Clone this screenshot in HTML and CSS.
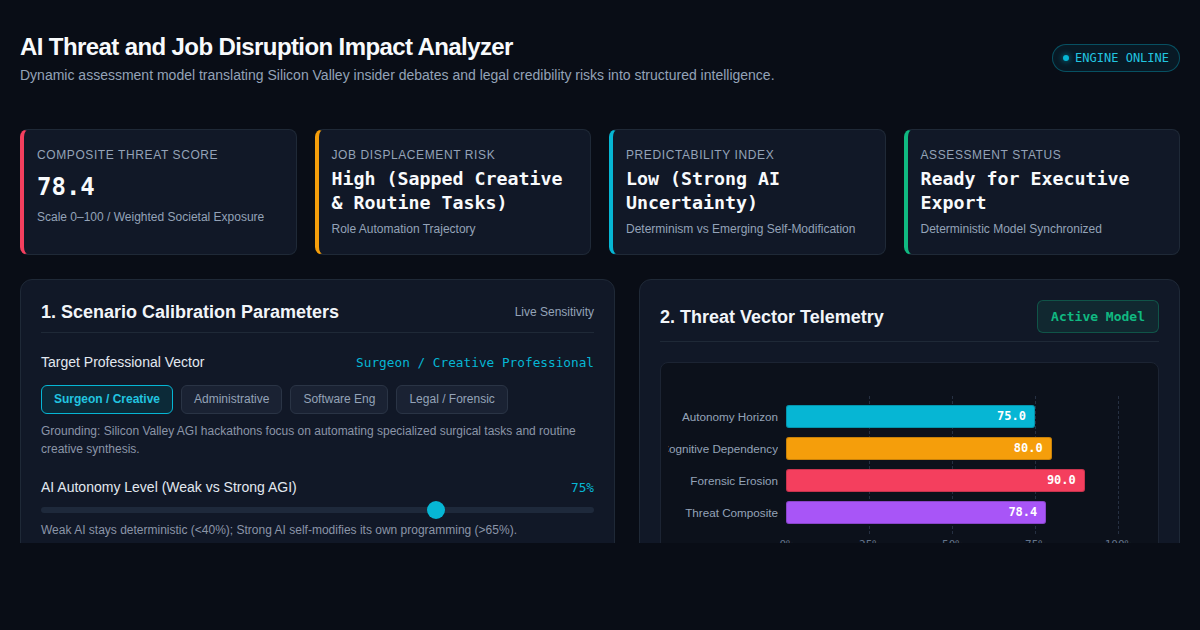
FILE: index.html
```html
<!DOCTYPE html>
<html lang="en">
<head>
<meta charset="utf-8">
<title>AI Threat and Job Disruption Impact Analyzer</title>
<link rel="stylesheet" href="styles.css">
</head>
<body>
<div class="app">
  <header class="top">
    <div class="top-text">
      <h1 class="title">AI Threat and Job Disruption Impact Analyzer</h1>
      <p class="subtitle">Dynamic assessment model translating Silicon Valley insider debates and legal credibility risks into structured intelligence.</p>
    </div>
    <div class="engine"><span class="engine-dot"></span>ENGINE ONLINE</div>
  </header>

  <section class="cards">
    <div class="card card-red">
      <div class="card-label">Composite Threat Score</div>
      <div class="card-value card-value-big">78.4</div>
      <div class="card-sub">Scale 0–100 / Weighted Societal Exposure</div>
    </div>
    <div class="card card-amber">
      <div class="card-label">Job Displacement Risk</div>
      <div class="card-value">High (Sapped Creative &amp; Routine Tasks)</div>
      <div class="card-sub">Role Automation Trajectory</div>
    </div>
    <div class="card card-cyan">
      <div class="card-label">Predictability Index</div>
      <div class="card-value">Low (Strong AI Uncertainty)</div>
      <div class="card-sub">Determinism vs Emerging Self-Modification</div>
    </div>
    <div class="card card-green">
      <div class="card-label">Assessment Status</div>
      <div class="card-value">Ready for Executive Export</div>
      <div class="card-sub">Deterministic Model Synchronized</div>
    </div>
  </section>

  <section class="panels">
    <div class="panel">
      <div class="panel-head">
        <h2 class="panel-title">1. Scenario Calibration Parameters</h2>
        <span class="panel-note">Live Sensitivity</span>
      </div>

      <div class="group">
        <div class="field-row">
          <span class="field-label">Target Professional Vector</span>
          <span class="field-value">Surgeon / Creative Professional</span>
        </div>
        <div class="chips">
          <button class="chip chip-active">Surgeon / Creative</button>
          <button class="chip">Administrative</button>
          <button class="chip">Software Eng</button>
          <button class="chip">Legal / Forensic</button>
        </div>
        <p class="hint">Grounding: Silicon Valley AGI hackathons focus on automating specialized surgical tasks and routine creative synthesis.</p>
      </div>

      <div class="group group-next">
        <div class="field-row">
          <span class="field-label">AI Autonomy Level (Weak vs Strong AGI)</span>
          <span class="field-value">75%</span>
        </div>
        <div class="slider">
          <div class="slider-track"></div>
          <div class="slider-thumb" style="left: 71.4%"></div>
        </div>
        <p class="hint hint-tight">Weak AI stays deterministic (&lt;40%); Strong AI self-modifies its own programming (&gt;65%).</p>
      </div>
    </div>

    <div class="panel">
      <div class="panel-head">
        <h2 class="panel-title">2. Threat Vector Telemetry</h2>
        <span class="model-badge">Active Model</span>
      </div>

      <div class="chart">
        <div class="plot">
          <div class="gridlines">
            <span class="gl" style="left: 25%"></span>
            <span class="gl" style="left: 50%"></span>
            <span class="gl" style="left: 75%"></span>
            <span class="gl" style="left: 100%"></span>
          </div>
          <div class="bar-row">
            <div class="bar-label"><span>Autonomy Horizon</span></div>
            <div class="bar-track"><div class="bar bar-cyan" style="width: 75%"><span>75.0</span></div></div>
          </div>
          <div class="bar-row">
            <div class="bar-label"><span>Cognitive Dependency</span></div>
            <div class="bar-track"><div class="bar bar-amber" style="width: 80%"><span>80.0</span></div></div>
          </div>
          <div class="bar-row">
            <div class="bar-label"><span>Forensic Erosion</span></div>
            <div class="bar-track"><div class="bar bar-red" style="width: 90%"><span>90.0</span></div></div>
          </div>
          <div class="bar-row">
            <div class="bar-label"><span>Threat Composite</span></div>
            <div class="bar-track"><div class="bar bar-purple" style="width: 78.4%"><span>78.4</span></div></div>
          </div>
        </div>
        <div class="axis">
          <span class="tick" style="left: 0%">0%</span>
          <span class="tick" style="left: 25%">25%</span>
          <span class="tick" style="left: 50%">50%</span>
          <span class="tick" style="left: 75%">75%</span>
          <span class="tick" style="left: 100%">100%</span>
        </div>
      </div>
    </div>
  </section>
</div>
</body>
</html>
```

FILE: styles.css
```css
* { box-sizing: border-box; }

html, body {
  margin: 0;
  padding: 0;
  background: #090d16;
}

body {
  font-family: "Liberation Sans", Arial, sans-serif;
  color: #e2e8f0;
}

.app {
  height: 543px;
  overflow: hidden;
  padding: 32px 20px 0;
}

/* Header */
.top {
  display: flex;
  justify-content: space-between;
  align-items: center;
}

.title {
  margin: 0;
  font-size: 24px;
  line-height: 29px;
  font-weight: 700;
  letter-spacing: -0.6px;
  color: #f8fafc;
}

.subtitle {
  margin: 6px 0 0;
  font-size: 14px;
  line-height: 16px;
  color: #94a3b8;
}

.engine {
  display: flex;
  align-items: center;
  gap: 6px;
  padding: 6px 10px;
  border: 1px solid rgba(6, 182, 212, 0.35);
  background: rgba(6, 182, 212, 0.08);
  border-radius: 999px;
  font-family: "DejaVu Sans Mono", monospace;
  font-size: 12px;
  line-height: 14px;
  color: #22c5e0;
}

.engine-dot {
  width: 6px;
  height: 6px;
  border-radius: 50%;
  background: #06b6d4;
  box-shadow: 0 0 6px rgba(6, 182, 212, 0.8);
}

/* Cards */
.cards {
  display: grid;
  grid-template-columns: repeat(4, 1fr);
  gap: 18px;
  margin-top: 46px;
}

.card {
  background: #111827;
  border: 1px solid #1f2937;
  border-left: 4px solid #f43f5e;
  border-radius: 8px;
  padding: 17px 14px 17px 13px;
}

.card-red { border-left-color: #f43f5e; }
.card-amber { border-left-color: #f59e0b; }
.card-cyan { border-left-color: #06b6d4; }
.card-green { border-left-color: #10b981; }

.card-label {
  font-size: 12px;
  line-height: 16px;
  text-transform: uppercase;
  letter-spacing: 0.6px;
  color: #94a3b8;
}

.card-value {
  margin-top: 4px;
  font-family: "DejaVu Sans Mono", monospace;
  font-weight: 700;
  font-size: 18.3px;
  line-height: 24px;
  color: #f8fafc;
}

.card-value-big {
  margin-top: 8px;
  font-size: 24px;
  line-height: 32px;
}

.card-sub {
  margin-top: 6px;
  font-size: 12px;
  line-height: 16px;
  color: #94a3b8;
}

/* Panels */
.panels {
  display: grid;
  grid-template-columns: 1.1fr 1fr;
  gap: 24px;
  margin-top: 24px;
}

.panel {
  background: #111827;
  border: 1px solid #1f2937;
  border-radius: 12px;
  padding: 20px;
  min-height: 320px;
}

.panel-head {
  display: flex;
  justify-content: space-between;
  align-items: center;
  padding-bottom: 8px;
  border-bottom: 1px solid #1f2937;
  margin-bottom: 20px;
}

.panel-title {
  margin: 0;
  font-size: 18px;
  line-height: 24px;
  font-weight: 700;
  color: #f1f5f9;
}

.panel-note {
  font-size: 12px;
  color: #94a3b8;
}

.model-badge {
  padding: 8px 13px;
  border: 1px solid rgba(16, 185, 129, 0.3);
  background: rgba(16, 185, 129, 0.1);
  border-radius: 6px;
  font-family: "DejaVu Sans Mono", monospace;
  font-weight: 700;
  font-size: 13px;
  line-height: 15px;
  color: #10b981;
}

/* Left panel content */
.group-next { margin-top: 20px; }

.field-row {
  display: flex;
  justify-content: space-between;
  align-items: center;
  height: 18px;
}

.field-label {
  font-size: 14px;
  line-height: 18px;
  color: #e2e8f0;
}

.field-value {
  font-family: "DejaVu Sans Mono", monospace;
  font-size: 12.75px;
  color: #06b6d4;
}

.chips {
  display: flex;
  gap: 8px;
  margin-top: 14px;
}

.chip {
  font-family: "Liberation Sans", Arial, sans-serif;
  font-size: 12px;
  line-height: 15px;
  padding: 6px 12px;
  border: 1px solid #2a3445;
  background: #1a2233;
  color: #94a3b8;
  border-radius: 6px;
}

.chip-active {
  border-color: #06b6d4;
  background: #0c2a38;
  color: #22c5e0;
  font-weight: 700;
}

.hint {
  margin: 8px 0 0;
  font-size: 12px;
  line-height: 18px;
  color: #8b95a8;
}

.hint-tight { margin-top: 2px; }

.slider {
  position: relative;
  height: 18px;
  margin-top: 5px;
  display: flex;
  align-items: center;
}

.slider-track {
  width: 100%;
  height: 6px;
  border-radius: 3px;
  background: #1e293b;
}

.slider-thumb {
  position: absolute;
  top: 0;
  width: 18px;
  height: 18px;
  border-radius: 50%;
  background: #06b6d4;
  transform: translateX(-50%);
}

/* Chart */
.chart {
  background: #0c111b;
  border: 1px solid #1c2433;
  border-radius: 8px;
  padding: 33px 40px 20px 7px;
}

.plot {
  position: relative;
  padding: 4px 0 6px;
}

.gridlines {
  position: absolute;
  top: 0;
  bottom: 0;
  left: 118px;
  right: 0;
}

.gl {
  position: absolute;
  top: 0;
  bottom: 0;
  border-left: 1px dashed #263042;
}

.bar-row {
  position: relative;
  display: grid;
  grid-template-columns: 110px 1fr;
  column-gap: 8px;
  align-items: center;
  height: 32px;
}

.bar-label {
  display: flex;
  justify-content: flex-end;
  overflow: hidden;
  white-space: nowrap;
  font-size: 11.7px;
  color: #94a3b8;
}

.bar-track {
  height: 23px;
}

.bar {
  height: 23px;
  border-radius: 3px;
  display: flex;
  justify-content: flex-end;
  align-items: center;
  padding-right: 9px;
  box-shadow: inset 0 0 0 1px rgba(0, 0, 0, 0.18);
  font-family: "DejaVu Sans Mono", monospace;
  font-weight: 700;
  font-size: 12px;
  color: #ffffff;
}

.bar-cyan { background: #06b6d4; }
.bar-amber { background: #f59e0b; }
.bar-red { background: #f43f5e; }
.bar-purple { background: #a855f7; }

.axis {
  position: relative;
  margin: 4px 0 0 118px;
  height: 14px;
}

.tick {
  position: absolute;
  top: 0;
  transform: translateX(-50%);
  font-family: "DejaVu Sans Mono", monospace;
  font-size: 11px;
  line-height: 13px;
  color: #64748b;
}
```
